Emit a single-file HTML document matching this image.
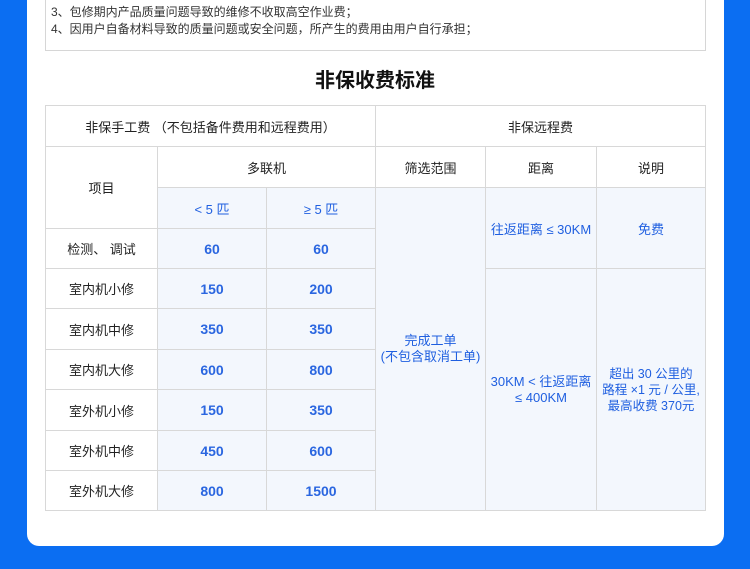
<!DOCTYPE html>
<html><head><meta charset="utf-8"><style>
*{margin:0;padding:0;box-sizing:border-box}
body{width:750px;height:569px;background:#0b6ef2;position:relative;overflow:hidden;font-family:"Liberation Sans","Noto Sans CJK SC",sans-serif}
.card{position:absolute;left:27px;top:-20px;width:697px;height:566px;background:#fff;border-radius:0 0 12px 12px}
.notice{position:absolute;left:45px;top:-5px;width:661px;height:56px;border:1px solid #d6d6d6;border-top:none;font-size:12px;color:#333;padding:9px 0 0 5px;line-height:17px}
.title{position:absolute;left:0;width:750px;top:64px;text-align:center;font-size:20px;font-weight:bold;color:#111}
.c{position:absolute;display:flex;align-items:center;justify-content:center;text-align:center;border-right:1px solid #d8d8d8;border-bottom:1px solid #d8d8d8;font-size:13px;color:#222}
.b{background:#f3f7fd;color:#2a66e0;font-weight:bold}
.r{font-weight:normal;color:#1f5fe0}
.n{font-size:14px}
.tbl{position:absolute;left:45px;top:105px;width:661px;height:406px;border-left:1px solid #d8d8d8;border-top:1px solid #d8d8d8}
</style></head><body>
<div class="card"></div>
<div class="notice">3、包修期内产品质量问题导致的维修不收取高空作业费；<br>4、因用户自备材料导致的质量问题或安全问题，所产生的费用由用户自行承担；</div>
<div class="title">非保收费标准</div>
<div class="tbl"></div>
<div class="c" style="left:46px;top:106px;width:330px;height:41px">非保手工费 （不包括备件费用和远程费用）</div>
<div class="c" style="left:376px;top:106px;width:330px;height:41px">非保远程费</div>
<div class="c" style="left:46px;top:147px;width:112px;height:82px">项目</div>
<div class="c" style="left:158px;top:147px;width:218px;height:41px">多联机</div>
<div class="c" style="left:376px;top:147px;width:110px;height:41px">筛选范围</div>
<div class="c" style="left:486px;top:147px;width:111px;height:41px">距离</div>
<div class="c" style="left:597px;top:147px;width:109px;height:41px">说明</div>
<div class="c b r" style="left:158px;top:188px;width:109px;height:41px">&lt; 5 匹</div>
<div class="c b r" style="left:267px;top:188px;width:109px;height:41px">≥ 5 匹</div>
<div class="c b r" style="left:376px;top:188px;width:110px;height:323px;line-height:16px">完成工单<br>(不包含取消工单)</div>
<div class="c b r" style="left:486px;top:188px;width:111px;height:81px">往返距离 ≤ 30KM</div>
<div class="c b r" style="left:597px;top:188px;width:109px;height:81px">免费</div>
<div class="c b r" style="left:486px;top:269px;width:111px;height:242px;line-height:16px">30KM &lt; 往返距离<br>≤ 400KM</div>
<div class="c b r" style="left:597px;top:269px;width:109px;height:242px;line-height:16px;font-size:12.5px">超出 30 公里的<br>路程 ×1 元 / 公里,<br>最高收费 370元</div>

<div class="c" style="left:46px;top:229px;width:112px;height:40px">检测、 调试</div>
<div class="c b n" style="left:158px;top:229px;width:109px;height:40px">60</div>
<div class="c b n" style="left:267px;top:229px;width:109px;height:40px">60</div>
<div class="c" style="left:46px;top:269px;width:112px;height:40px">室内机小修</div>
<div class="c b n" style="left:158px;top:269px;width:109px;height:40px">150</div>
<div class="c b n" style="left:267px;top:269px;width:109px;height:40px">200</div>
<div class="c" style="left:46px;top:309px;width:112px;height:41px">室内机中修</div>
<div class="c b n" style="left:158px;top:309px;width:109px;height:41px">350</div>
<div class="c b n" style="left:267px;top:309px;width:109px;height:41px">350</div>
<div class="c" style="left:46px;top:350px;width:112px;height:40px">室内机大修</div>
<div class="c b n" style="left:158px;top:350px;width:109px;height:40px">600</div>
<div class="c b n" style="left:267px;top:350px;width:109px;height:40px">800</div>
<div class="c" style="left:46px;top:390px;width:112px;height:41px">室外机小修</div>
<div class="c b n" style="left:158px;top:390px;width:109px;height:41px">150</div>
<div class="c b n" style="left:267px;top:390px;width:109px;height:41px">350</div>
<div class="c" style="left:46px;top:431px;width:112px;height:40px">室外机中修</div>
<div class="c b n" style="left:158px;top:431px;width:109px;height:40px">450</div>
<div class="c b n" style="left:267px;top:431px;width:109px;height:40px">600</div>
<div class="c" style="left:46px;top:471px;width:112px;height:40px">室外机大修</div>
<div class="c b n" style="left:158px;top:471px;width:109px;height:40px">800</div>
<div class="c b n" style="left:267px;top:471px;width:109px;height:40px">1500</div>
</body></html>
